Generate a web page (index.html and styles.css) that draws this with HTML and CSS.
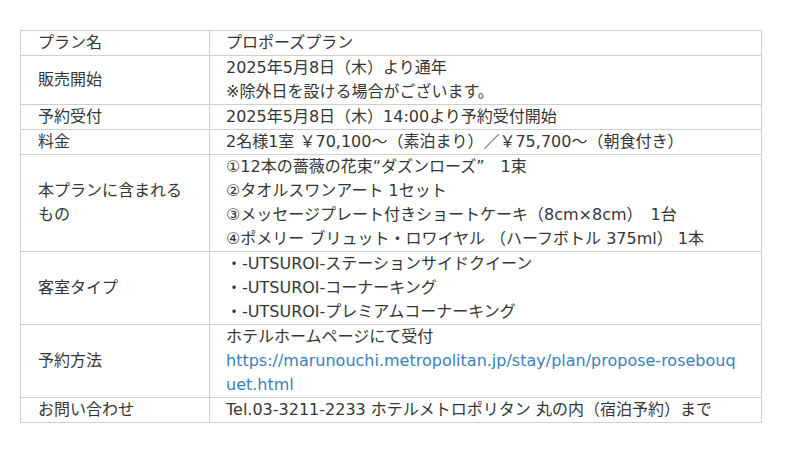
FILE: index.html
```html
<!DOCTYPE html>
<html lang="ja">
<head>
<meta charset="utf-8">
<link rel="stylesheet" href="styles.css">
</head>
<body>
<div class="page">
<table class="plan">
<colgroup><col class="c1"><col class="c2"></colgroup>
<tbody>
<tr><th>プラン名</th><td>プロポーズプラン</td></tr>
<tr><th>販売開始</th><td>2025年5月8日（木）より通年<br>※除外日を設ける場合がございます。</td></tr>
<tr><th>予約受付</th><td>2025年5月8日（木）14:00より予約受付開始</td></tr>
<tr><th>料金</th><td>2名様1室 ￥70,100～（素泊まり）／￥75,700～（朝食付き）</td></tr>
<tr><th>本プランに含まれる<br>もの</th><td>①12本の薔薇の花束“ダズンローズ”　1束<br>②タオルスワンアート 1セット<br>③メッセージプレート付きショートケーキ（8cm×8cm）　1台<br>④ポメリー ブリュット・ロワイヤル （ハーフボトル 375ml） 1本</td></tr>
<tr><th>客室タイプ</th><td>・-UTSUROI-ステーションサイドクイーン<br>・-UTSUROI-コーナーキング<br>・-UTSUROI-プレミアムコーナーキング</td></tr>
<tr><th>予約方法</th><td>ホテルホームページにて受付<br><a class="link" href="#">https://marunouchi.metropolitan.jp/stay/plan/propose-rosebouquet.html</a></td></tr>
<tr><th>お問い合わせ</th><td>Tel.03-3211-2233 ホテルメトロポリタン 丸の内（宿泊予約）まで</td></tr>
</tbody>
</table>
</div>
</body>
</html>
```
FILE: styles.css
```css
html, body {
  margin: 0;
  padding: 0;
  background: #fff;
}
.page {
  padding: 30px 0 0 20px;
}
.plan {
  border-collapse: collapse;
  width: 742px;
  table-layout: fixed;
  font-family: "DejaVu Sans", "Noto Sans CJK JP", sans-serif;
  font-size: 16px;
  line-height: 24px;
  color: #363636;
}
.c1 { width: 189px; }
.plan th, .plan td {
  border: 1px solid #cfcfcf;
  padding: 0 19px 0 16px;
  text-align: left;
  font-weight: normal;
}
.plan th {
  padding-left: 17px;
  vertical-align: middle;
}
.plan td {
  vertical-align: top;
}
.link {
  color: #3a80c0;
  text-decoration: none;
  word-break: break-all;
}
```
